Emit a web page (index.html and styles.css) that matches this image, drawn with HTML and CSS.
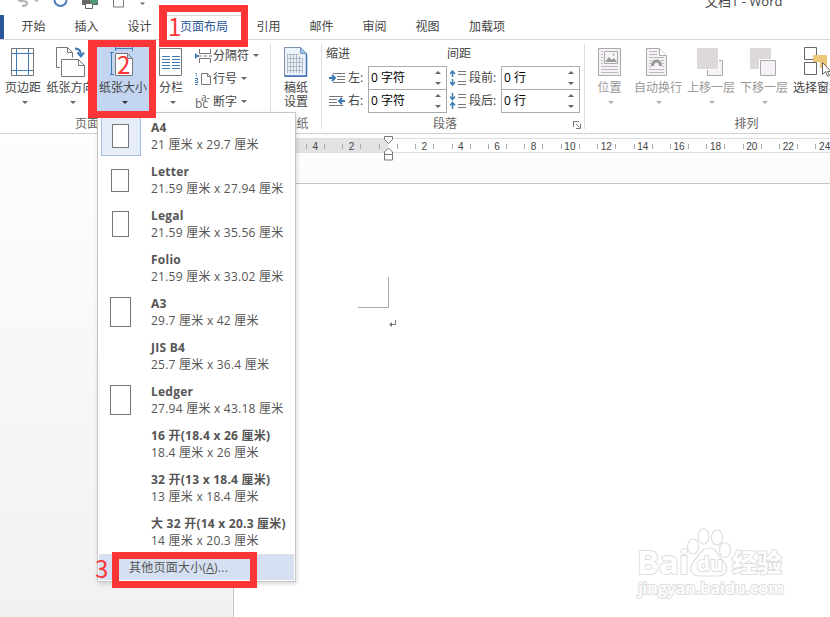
FILE: index.html
```html
<!DOCTYPE html>
<html lang="zh-CN">
<head>
<meta charset="UTF-8" />
<title>文档1 - Word</title>
<link rel="stylesheet" href="styles.css">
</head>
<body>

<!-- 标题栏 -->
<div class="titlebar">
  <svg class="quick" width="150" height="12" viewBox="0 0 150 12" fill="none">
    <path d="M17-1L22 2M19 1h5q4 1 3 3t-5 2" stroke="#b5b5b5" stroke-width="2"/>
    <path d="M34 0h5l-2.500 2z" fill="#b5b5b5"/>
    <circle cx="60.500" cy="0" r="6" stroke="#4a7fba" stroke-width="2"/>
    <path d="M82 0h16v5H82z" fill="#666"/>
    <path d="M85.500 3.500h7v5h-7z" fill="#fff" stroke="#666"/>
    <circle cx="94" cy="0" r="4" fill="#4f9a78"/>
    <path d="M113.500-2v9h10v-9" stroke="#777"/>
    <path d="M140 2.500h5l-2.500 2.500z" fill="#666"/>
  </svg>
  <span class="doc-title">文档1 - Word</span>
</div>

<!-- 选项卡 -->
<div class="tabs">
  <span class="file-tab"></span>
  <span class="tab">开始</span>
  <span class="tab">插入</span>
  <span class="tab">设计</span>
  <span class="tab active">页面布局</span>
  <span class="tab">引用</span>
  <span class="tab">邮件</span>
  <span class="tab">审阅</span>
  <span class="tab">视图</span>
  <span class="tab wide">加载项</span>
</div>

<!-- 功能区 -->
<div class="ribbon">
  <div class="group setup">
    <div class="tools">
      <div class="big margins">
        <svg width="24" height="30" fill="none">
          <path d="M.5 1.500h22v27H.5z" stroke="#777"/>
          <path d="M5.500 2v26M17.500 2v26M1 6.500h21M1 23.500h21" stroke="#3f7ab5"/>
        </svg>
        <span>页边距</span><i class="arrow"></i>
      </div>
      <div class="big direction">
        <svg width="30" height="30" fill="none">
          <path d="M4 20.500H.5V.5h11l5 5v5M11.500.5v5h5" stroke="#777"/>
          <path d="M5.500 12.500h17l6 6v11h-23zM22.500 12.500v6h6" fill="#fff" stroke="#777"/>
          <path d="M19 1.500q6 0 6 7M21.500 5.500l3.500 4 3-4" stroke="#3f7ab5" stroke-width="2"/>
        </svg>
        <span>纸张方向</span><i class="arrow"></i>
      </div>
      <div class="big pressed">
        <svg width="28" height="30" fill="none">
          <path d="M6 1.500h18M6.500 0v4M23.500 0v4M2.500 6v22M1 5.500h4M1 27.500h4" stroke="#3f7ab5"/>
          <path d="M6.500 6.500h12l5 5v17h-17zM18.500 6.500v5h5" fill="#fff" stroke="#777"/>
        </svg>
        <span>纸张大小</span><i class="arrow"></i>
      </div>
      <div class="big columns">
        <svg width="24" height="30" fill="none">
          <path d="M.5 1.500h22v27H.5z" stroke="#777"/>
          <path d="M3 9.500h8M3 12.500h8M3 15.500h8M3 18.500h8M3 21.500h8M13 9.500h8M13 12.500h8M13 15.500h8M13 18.500h8M13 21.500h8" stroke="#3f7ab5"/>
        </svg>
        <span>分栏</span><i class="arrow"></i>
      </div>
      <div class="small-tools">
        <div class="small">
          <svg width="17" height="16" fill="none">
            <path d="M4.500 1v4.500h11V1M4.500 15v-4.500h11V15M3 8h4M9 8h3M14 8h3" stroke="#777"/>
            <path d="M0 5l4 3-4 3z" fill="#3f7ab5"/>
          </svg>
          <span>分隔符</span><i class="arrow"></i>
        </div>
        <div class="small">
          <svg width="17" height="16" fill="none">
            <path d="M6.500 2.500h6l3 3v8h-9zM12.500 2.500v3h3" fill="#fff" stroke="#777"/>
            <path d="M.5 2.500h1v3M0 7.500h2.500M0 9.500h2.500M0 11.500h2.500M0 13.500h2.500M2.500 7v7" stroke="#3f7ab5" stroke-dasharray="2 1"/>
          </svg>
          <span>行号</span><i class="arrow"></i>
        </div>
        <div class="small">
          <svg width="17" height="16">
            <text x="0" y="14" class="hyphen-icon">bc</text>
            <text x="6" y="7" class="hyphen-icon sup">a-</text>
          </svg>
          <span>断字</span><i class="arrow"></i>
        </div>
      </div>
    </div>
    <div class="group-name">页面设置</div>
  </div>

  <div class="group draft">
    <div class="tools">
      <div class="big">
        <svg width="24" height="30" fill="none">
          <path d="M.5.500h16l6 6v23H.5z" fill="#edf3fb" stroke="#7d8fa8"/>
          <path d="M22.500 7v22H1" stroke="#3d70bd" stroke-width="1.500"/>
          <path d="M16.500.5v6h6z" fill="#a9c5ec" stroke="#6e93c7"/>
          <path d="M3 7.500h12M3 11.500h16M3 15.500h16M3 19.500h16M3 23.500h16M3.500 7v19M6.500 7v19M9.500 7v19M12.500 7v19M15.500 9v17M18.500 11v15" stroke="#b0b8c4"/>
        </svg>
        <span>稿纸</span><span>设置</span>
      </div>
    </div>
    <div class="group-name">稿纸</div>
  </div>

  <div class="group paragraph">
    <div class="fields">
      <div class="field-col">
        <div class="caption">缩进</div>
        <div class="field">
          <svg width="17" height="16" fill="none">
            <path d="M4 3.500h12M8 6.500h8M8 9.500h8M4 12.500h12" stroke="#777"/>
            <path d="M0 8h6M3 5l3 3-3 3" stroke="#3f7ab5" stroke-width="2"/>
          </svg>
          <label>左:</label>
          <div class="spin"><span>0 字符</span><i class="up"></i><i class="down"></i></div>
        </div>
        <div class="field">
          <svg width="17" height="16" fill="none">
            <path d="M0 3.500h14M0 6.500h8M0 9.500h8M0 12.500h14" stroke="#777"/>
            <path d="M10 8h6M13 5l-3 3 3 3" stroke="#3f7ab5" stroke-width="2"/>
          </svg>
          <label>右:</label>
          <div class="spin"><span>0 字符</span><i class="up"></i><i class="down"></i></div>
        </div>
      </div>
      <div class="field-col second">
        <div class="caption">间距</div>
        <div class="field">
          <svg width="17" height="16" fill="none">
            <path d="M8 1.500h8M8 4.500h8M8 11.500h8M8 14.500h8" stroke="#777"/>
            <path d="M2.500 1v6M0 4l2.500-3 2.500 3M2.500 9v6M0 12l2.500 3 2.500-3" stroke="#3f7ab5" stroke-width="1.500"/>
          </svg>
          <label>段前:</label>
          <div class="spin"><span>0 行</span><i class="up"></i><i class="down"></i></div>
        </div>
        <div class="field">
          <svg width="17" height="16" fill="none">
            <path d="M8 1.500h8M8 4.500h8M8 11.500h8M8 14.500h8" stroke="#777"/>
            <path d="M2.500 0v6M0 3.500l2.500 3 2.500-3M2.500 10v6M0 12.500l2.500-3 2.500 3" stroke="#3f7ab5" stroke-width="1.500"/>
          </svg>
          <label>段后:</label>
          <div class="spin"><span>0 行</span><i class="up"></i><i class="down"></i></div>
        </div>
      </div>
    </div>
    <div class="group-name">段落</div>
    <svg class="launcher" width="8" height="8" fill="none">
      <path d="M.5 6V.5H6M3 3l3.500 3.500M7.500 3v4.500H3" stroke="#777"/>
    </svg>
  </div>

  <div class="group arrange">
    <div class="tools">
      <div class="big off">
        <svg width="24" height="30" fill="none">
          <path d="M.5 1.500h22v27H.5z" fill="#f5f1f6" stroke="#aaa"/>
          <path d="M6.500 4.500h13v12h-13z" fill="#f8f5f8" stroke="#aaa"/>
          <path d="M7 15l4-5 3 3 2-2 3 4z" fill="#999"/>
          <circle cx="15.500" cy="7.500" r="1.500" fill="#ccc"/>
          <path d="M3 4.500h2M3 7.500h2M3 10.500h2M3 13.500h2M3 16.500h2M3 19.500h17M3 22.500h17M3 25.500h17" stroke="#bbb"/>
        </svg>
        <span>位置</span><i class="arrow"></i>
      </div>
      <div class="big off">
        <svg width="24" height="30" fill="none">
          <path d="M.5 1.500h13l7 7v20H.5z" fill="#f5f1f6" stroke="#aaa"/>
          <path d="M13.500 1.500v7h7" fill="#fff" stroke="#aaa"/>
          <path d="M3 4.500h8M3 7.500h8M3 10.500h15M3 13.500h3M15 13.500h3M3 16.500h2M3 19.500h2M16 16.500h2M16 19.500h2M3 22.500h15M3 25.500h15" stroke="#bbb"/>
          <path d="M6.500 19q0-5 4-5t4 5" stroke="#999" stroke-width="3"/>
        </svg>
        <span>自动换行</span><i class="arrow"></i>
      </div>
      <div class="big off forward">
        <svg width="28" height="30" fill="none">
          <path d="M10.500 13.500h15v15h-15z" fill="#f5f1f6" stroke="#aaa"/>
          <path d="M0 1h22v22H0z" fill="#fff"/>
          <path d="M0 1h21v21H0z" fill="#dcd8dc"/>
        </svg>
        <span>上移一层</span><i class="arrow"></i>
      </div>
      <div class="big off">
        <svg width="28" height="30" fill="none">
          <path d="M0 1h21v21H0z" fill="#dcd8dc"/>
          <path d="M9 12h18v18H9z" fill="#fff"/>
          <path d="M10.500 13.500h15v15h-15z" fill="#f5f1f6" stroke="#aaa"/>
        </svg>
        <span>下移一层</span><i class="arrow"></i>
      </div>
      <div class="big pane">
        <svg width="28" height="30" fill="none">
          <path d="M.5.5h12v12H.5zM.5 15.500h12v12H.5z" fill="#fff" stroke="#666"/>
          <path d="M9 8h14v13h-7v-6H9z" fill="#eec77b"/>
          <path d="M18.500 15.500v12l3-3 2 5 2-1-2-4h3.500z" fill="#fff" stroke="#666"/>
        </svg>
        <span>选择窗格</span>
      </div>
    </div>
    <div class="group-name">排列</div>
  </div>
</div>

<!-- 编辑区 -->
<div class="workspace">
  <div class="ruler">
    <span>4</span><span>2</span><span class="zero"></span><span>2</span><span>4</span><span>6</span><span>8</span><span>10</span><span>12</span><span>14</span><span>16</span><span>18</span><span>20</span><span>22</span><span>24</span>
    <svg class="indent" width="11" height="26" fill="#fff" stroke="#777">
      <path d="M1.500.5h8v3l-4 4-4-4zM5.500 12l4 4v8h-8v-8zM1.500 18.500h8"/>
    </svg>
  </div>
  <div class="page">
    <div class="crop"></div>
    <svg class="return" width="8" height="8" fill="none">
      <path d="M6.500 0v4.500H1" stroke="#777"/>
      <path d="M0 4.500l3-2.500v5z" fill="#777"/>
    </svg>
    <svg class="watermark" width="160" height="80" viewBox="0 0 160 80">
      <g>
        <text x="5" y="46" class="logo" textLength="52" lengthAdjust="spacingAndGlyphs">Bai</text>
        <ellipse cx="61" cy="18.500" rx="5.500" ry="7.500"/>
        <ellipse cx="71.500" cy="8.500" rx="5.500" ry="7.500"/>
        <ellipse cx="85" cy="9.500" rx="5.500" ry="7.500"/>
        <ellipse cx="93" cy="22" rx="5.500" ry="7.500"/>
        <path d="M77 20c8 0 9 8 14 13 7 7 3 15-5 15H68c-9 0-12-8-6-15 5-5 7-13 15-13z"/>
        <text x="65" y="43" class="du">du</text>
        <text x="100" y="44" class="jy">经验</text>
        <text x="6" y="66" class="site" textLength="146" lengthAdjust="spacingAndGlyphs">jingyan.baidu.com</text>
      </g>
    </svg>
  </div>
</div>

<!-- 纸张大小下拉菜单 -->
<div class="menu">
  <div class="item selected"><div class="thumb"><i class="a4"></i></div><div><b>A4</b><p>21 厘米 x 29.7 厘米</p></div></div>
  <div class="item"><div class="thumb"><i class="letter"></i></div><div><b>Letter</b><p>21.59 厘米 x 27.94 厘米</p></div></div>
  <div class="item"><div class="thumb"><i class="legal"></i></div><div><b>Legal</b><p>21.59 厘米 x 35.56 厘米</p></div></div>
  <div class="item"><div class="thumb"></div><div><b>Folio</b><p>21.59 厘米 x 33.02 厘米</p></div></div>
  <div class="item"><div class="thumb"><i class="a3"></i></div><div><b>A3</b><p>29.7 厘米 x 42 厘米</p></div></div>
  <div class="item"><div class="thumb"></div><div><b>JIS B4</b><p>25.7 厘米 x 36.4 厘米</p></div></div>
  <div class="item"><div class="thumb"><i class="a3"></i></div><div><b>Ledger</b><p>27.94 厘米 x 43.18 厘米</p></div></div>
  <div class="item"><div class="thumb"></div><div><b>16 开(18.4 x 26 厘米)</b><p>18.4 厘米 x 26 厘米</p></div></div>
  <div class="item"><div class="thumb"></div><div><b>32 开(13 x 18.4 厘米)</b><p>13 厘米 x 18.4 厘米</p></div></div>
  <div class="item"><div class="thumb"></div><div><b>大 32 开(14 x 20.3 厘米)</b><p>14 厘米 x 20.3 厘米</p></div></div>
  <div class="more">其他页面大小(<u>A</u>)...</div>
</div>

<!-- 步骤标注 -->
<div class="mark mark1"></div>
<div class="mark mark2"></div>
<div class="mark mark3"></div>
<span class="num num1">1</span>
<span class="num num2">2</span>
<span class="num num3">3</span>

</body>
</html>
```
FILE: styles.css
```css
* {
  box-sizing: border-box;
}

body {
  margin: 0;
  position: relative;
  width: 830px;
  height: 617px;
  overflow: hidden;
  background: #fff;
  color: #444;
  font: 12px/14px "Open Sans", "Noto Sans CJK SC", sans-serif;
  white-space: nowrap;
}

svg {
  display: block;
  flex: none;
}

/* 标题栏 */
.titlebar {
  display: flex;
  height: 15px;
  overflow: hidden;
}
.doc-title {
  margin: -7px 0 0 555px;
  font-size: 13px;
  line-height: 16px;
}

/* 选项卡 */
.tabs {
  display: flex;
  height: 25px;
  border-bottom: 1px solid #d5d5d5;
}
.file-tab {
  width: 4px;
  margin-right: 3px;
  background: #2b579a;
}
.tab {
  width: 53px;
  line-height: 23px;
  text-align: center;
}
.tab.active {
  width: 76px;
  height: 25px;
  border: 1px solid #d5d5d5;
  border-bottom: none;
  background: #fff;
  color: #2b579a;
  line-height: 21px;
}
.tab.wide {
  width: 66px;
}

/* 功能区 */
.ribbon {
  display: flex;
  height: 94px;
  overflow: hidden;
  border-bottom: 1px solid #d0d0d0;
}
.group {
  position: relative;
  flex: none;
  display: flex;
  flex-direction: column;
  justify-content: space-between;
  height: 93px;
  padding-bottom: 2px;
}
.group::after {
  content: "";
  position: absolute;
  right: 0;
  top: 4px;
  width: 1px;
  height: 85px;
  background: #dcdcdc;
}
.setup {
  width: 271px;
}
.draft {
  width: 51px;
}
.paragraph {
  width: 263px;
}
.arrange {
  width: 245px;
}
.arrange::after {
  display: none;
}
.group-name {
  text-align: center;
  color: #666;
}
.setup .group-name {
  padding-right: 73px;
}
.paragraph .group-name {
  padding-right: 17px;
}
.arrange .group-name {
  width: 323px;
}
.tools {
  display: flex;
}
.big {
  flex: none;
  display: flex;
  flex-direction: column;
  align-items: center;
  width: 48px;
  height: 71px;
  padding-top: 7px;
}
.big svg {
  margin-bottom: 4px;
}
.big.margins {
  width: 46px;
}
.big.margins .arrow {
  margin-left: 3px;
}
.big.direction {
  width: 49px;
}
.big.direction .arrow {
  margin-left: 4px;
}
.big.pressed {
  width: 56px;
  background: #c3d5f1;
}
.big.pressed .arrow {
  margin-left: 4px;
  border-top-color: #333;
}
.big.columns {
  width: 40px;
}
.big.columns .arrow {
  margin-left: 3px;
}
.draft .big {
  width: 50px;
}
.arrow {
  border: 3px solid transparent;
  border-top-color: #666;
  border-bottom: none;
}
.big .arrow {
  margin-top: 6px;
}
.small-tools {
  padding: 4px 0 0 4px;
}
.small {
  display: flex;
  align-items: center;
  height: 23px;
}
.small span {
  margin: 0 4px 0 1px;
}
.hyphen-icon {
  font: 12px "Open Sans", sans-serif;
  fill: #666;
}
.hyphen-icon.sup {
  font-size: 10px;
}
.off {
  color: #999;
}
.off .arrow {
  border-top-color: #b0b0b0;
  margin-left: 2px;
}
.off:first-child {
  width: 49px;
}
.big.forward,
.big.pane {
  width: 58px;
}
.pane svg {
  margin-left: 1px;
}

/* 段落 */
.fields {
  display: flex;
  padding: 7px 0 0 4px;
}
.field-col {
  width: 121px;
}
.field-col.second {
  width: 133px;
}
.caption {
  height: 19px;
}
.field {
  display: flex;
  align-items: center;
  justify-content: flex-end;
  height: 23px;
}
.field label {
  width: 20px;
  margin-left: 2px;
}
.second .field label {
  width: 32px;
}
.spin {
  position: relative;
  width: 79px;
  height: 24px;
  padding: 4px 2px;
  margin-bottom: -1px;
  border: 1px solid #ababab;
  background: #fff;
  color: #000;
}
.spin i {
  position: absolute;
  right: 5px;
  border: 3px solid transparent;
}
.spin .up {
  top: 4px;
  border-top: none;
  border-bottom-color: #666;
}
.spin .down {
  bottom: 4px;
  border-bottom: none;
  border-top-color: #666;
}
.launcher {
  position: absolute;
  right: 4px;
  bottom: 4px;
}

/* 编辑区 */
.workspace {
  height: 483px;
  padding-top: 4px;
  background: linear-gradient(#fdfdfd, #f1f1f1);
}
.ruler {
  position: relative;
  display: flex;
  height: 15px;
  margin-left: 234px;
  padding-left: 63px;
  overflow: visible;
  border-top: 1px solid #dedede;
  border-bottom: 1px solid #dedede;
  background: linear-gradient(90deg, #e3e3e3 154px, #fff 154px);
}
.ruler span {
  flex: none;
  width: 36.4px;
  font: 10px/15px "Liberation Sans", sans-serif;
  text-align: center;
  background:
    linear-gradient(#aaa, #aaa) 9px 5px / 1px 5px no-repeat,
    linear-gradient(#aaa, #aaa) 27px 5px / 1px 5px no-repeat;
}
.indent {
  position: absolute;
  left: 149px;
  top: -3px;
}
.page {
  position: relative;
  height: 434px;
  margin: 30px 0 0 233px;
  border: 1px solid #c6c6c6;
  border-width: 1px 0 0 1px;
  background: #fff;
}
.crop {
  width: 31px;
  height: 31px;
  margin: 93px 0 0 124px;
  border: 1px solid #aaa;
  border-width: 0 1px 1px 0;
}
.return {
  margin: 12px 0 0 155px;
}
.watermark {
  position: absolute;
  left: 398px;
  top: 344px;
  fill: #fff;
  stroke: #dedede;
  stroke-width: 1.2px;
}
.watermark text {
  font-family: "Open Sans", "Noto Sans CJK SC", sans-serif;
  font-weight: bold;
  stroke-width: 2px;
  paint-order: stroke;
}
.logo {
  font-size: 33px;
}
.du {
  font-size: 20px;
}
.jy {
  font-size: 25px;
}
.watermark .site {
  font-size: 16px;
  font-weight: 600;
}

/* 下拉菜单 */
.menu {
  position: absolute;
  left: 97px;
  top: 112px;
  width: 199px;
  height: 470px;
  padding: 1px;
  border: 1px solid #c6c6c6;
  background: #fff;
  box-shadow: 1px 2px 4px rgba(0,0,0,0.15);
  color: #555;
  letter-spacing: 0.24px;
}
.item {
  display: flex;
  align-items: center;
  height: 44px;
  padding-left: 2px;
}
.item b {
  display: block;
  line-height: 17px;
}
.item p {
  margin: 0;
  line-height: 17px;
}
.thumb {
  display: flex;
  align-items: center;
  justify-content: center;
  width: 40px;
  height: 40px;
  margin-right: 10px;
  padding-right: 2px;
}
.selected .thumb {
  border: 1px solid #a3bde3;
  background: #e6edf8;
}
.thumb i {
  border: 1px solid #777;
  background: #fff;
}
.a4 {
  width: 17px;
  height: 24px;
}
.letter {
  width: 18px;
  height: 23px;
}
.legal {
  width: 17px;
  height: 26px;
}
.a3 {
  width: 21px;
  height: 30px;
}
.more {
  height: 26px;
  padding-left: 30px;
  border-top: 1px solid #e1e1e1;
  background: #d5e1f2;
  background-clip: padding-box;
  line-height: 25px;
}

/* 红色标注 */
.mark {
  position: absolute;
  border: 7px solid #fc3636;
}
.mark1 {
  left: 159px;
  top: 5px;
  width: 89px;
  height: 42px;
  border-left-width: 8px;
}
.mark2 {
  left: 88px;
  top: 40px;
  width: 68px;
  height: 78px;
  border-left-width: 9px;
}
.mark3 {
  left: 112px;
  top: 552px;
  width: 145px;
  height: 36px;
}
.num {
  position: absolute;
  color: #fc3636;
  font: 24px/24px "Noto Sans CJK SC", sans-serif;
}
.num1 {
  left: 168px;
  top: 14px;
}
.num2 {
  left: 117px;
  top: 52px;
}
.num3 {
  left: 95px;
  top: 556px;
}
```
